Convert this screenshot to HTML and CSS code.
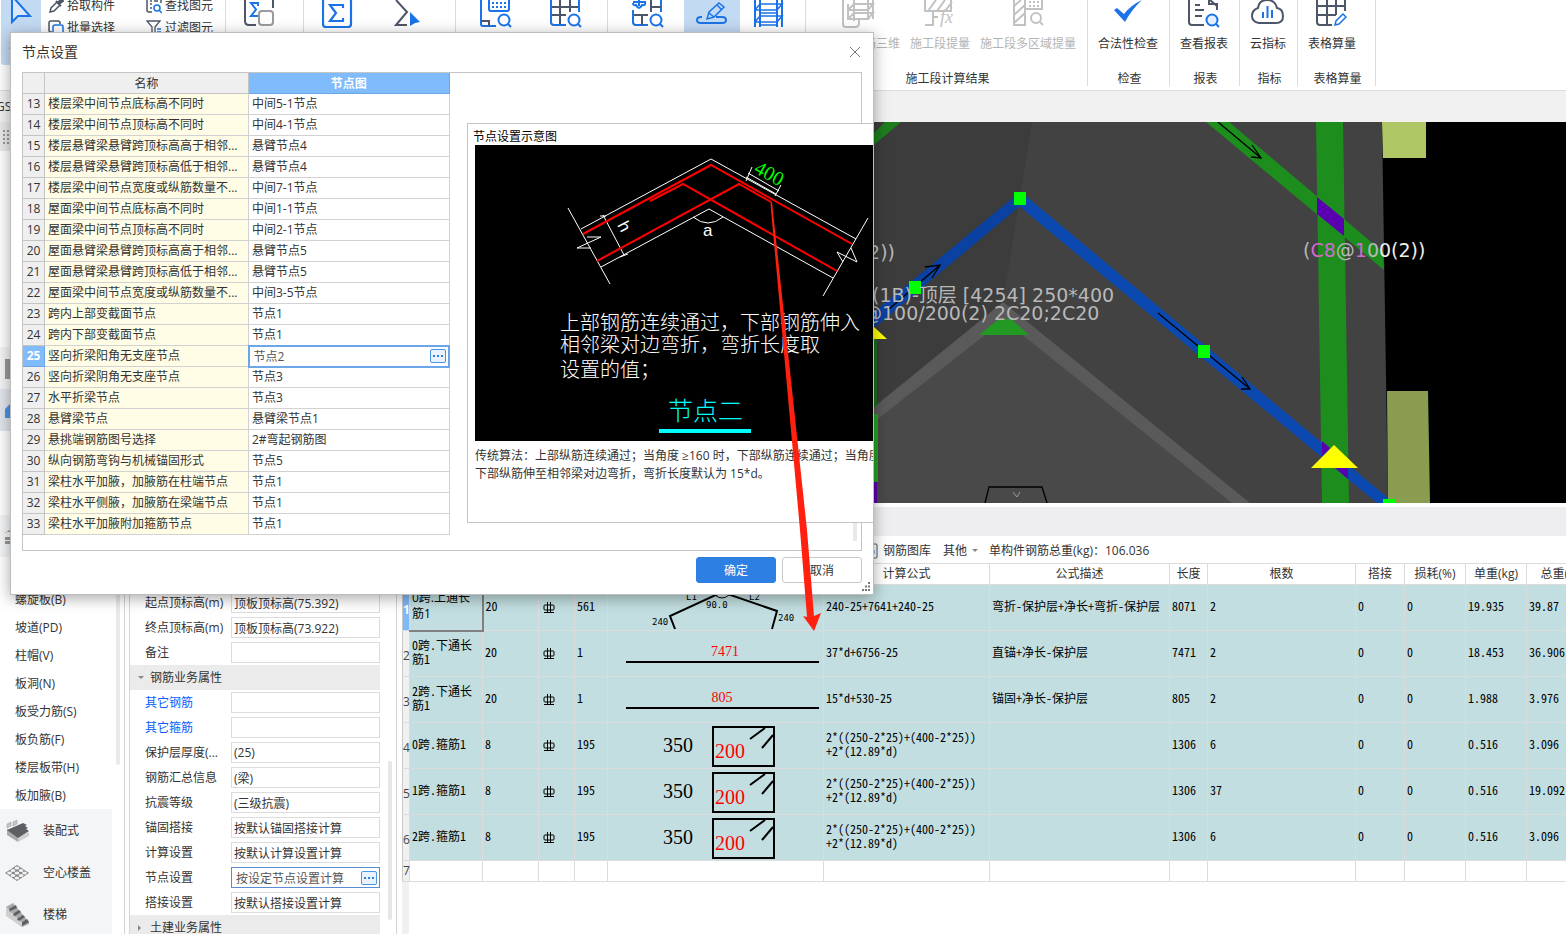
FILE: index.html
```html
<!DOCTYPE html>
<html lang="zh-CN">
<head>
<meta charset="utf-8">
<title>节点设置</title>
<link rel="stylesheet" href="styles.css">
</head>
<body>
<div class="app">
  <header class="ribbon">
    <section class="group g-select">
      <button class="tool pick on" aria-label="选择">
        <svg width="24" height="28" viewBox="0 0 24 28"><path d="M3 -4V22L9 16H21Z" fill="#d9e8fb" stroke="#1a73e8" stroke-width="2"/></svg>
        <span>选择</span>
      </button>
      <div class="minis">
        <button class="mini"><svg width="16" height="16" viewBox="0 0 16 16"><path d="M2 14l1-4 6-6 3 3-6 6z" fill="none" stroke="#4d5666" stroke-width="1.5"/><path d="M8 3l5 5M10 5l3-4 2 2-4 3z" fill="#4d5666" stroke="#4d5666" stroke-width="2"/></svg>拾取构件</button>
        <button class="mini"><svg width="16" height="16" viewBox="0 0 16 16"><path d="M4 12H2.500Q1 12 1 10V3Q1 1 3 1H10Q12 1 12 3V4" fill="none" stroke="#4d5666" stroke-width="1.500"/><rect x="5" y="5" width="10" height="10" rx="2" fill="#fff" stroke="#1a73e8" stroke-width="1.500"/></svg>批量选择</button>
      </div>
      <div class="minis">
        <button class="mini"><svg width="16" height="16" viewBox="0 0 16 16"><path d="M1 0V12Q1 14 3 14H6M15 0V5M4 3H6M4 6H6M4 10H6M8 3H12" fill="none" stroke="#4d5666" stroke-width="1.500"/><circle cx="11" cy="10" r="3" fill="none" stroke="#1a73e8" stroke-width="1.500"/><path d="M13 12l3 3" stroke="#1a73e8" stroke-width="1.500"/></svg>查找图元</button>
        <button class="mini"><svg width="16" height="16" viewBox="0 0 16 16"><path d="M1 1H14L9 7V14L6 12V7Z" fill="none" stroke="#4d5666" stroke-width="1.300"/><path d="M11 9H15M11 12H15" stroke="#1a73e8" stroke-width="1.500"/></svg>过滤图元</button>
      </div>
    </section>
    <section class="group g-one">
      <button class="tool" aria-label="汇总"><svg width="32" height="28" viewBox="0 0 32 28" fill="none" stroke-width="2"><path d="M1 0V21Q1 25 5 25H12M29 0V8" stroke="#4d5666"/><path d="M14 6V3H7L12 9.500 7 16H14" stroke="#1a73e8"/><rect x="15" y="11" width="14" height="14" rx="3" stroke="#9a9a9a" fill="#fff"/></svg></button>
    </section>
    <section class="group g-sum">
      <button class="tool" aria-label="汇总计算"><svg width="32" height="28" viewBox="0 0 32 28" fill="none" stroke="#1a73e8" stroke-width="2.200"><rect x="1" y="-2" width="28" height="29" rx="3"/><path d="M21 8V5H8L14 13 8 21H21V18"/></svg></button>
      <button class="tool" aria-label="汇总选中图元"><svg width="32" height="28" viewBox="0 0 32 28"><path d="M2 0L13 12 2 25H13" fill="none" stroke="#4d5666" stroke-width="2"/><path d="M16 12L26 22 21 23 16 26Z" fill="#1a73e8"/></svg></button>
    </section>
    <section class="group g-look">
      <button class="tool" aria-label="查看计算式"><svg width="32" height="28" viewBox="0 0 32 28" fill="none" stroke="#1a73e8" stroke-width="2"><path d="M1 0V24Q1 26 3 26H16"/><path d="M9 -2V9Q9 11 11 11H27Q29 11 29 9V-2"/><path d="M12 3H27M12 7H27" stroke-dasharray="2 2"/><path d="M1 21H9V26" stroke="#4d5666"/><circle cx="24" cy="20" r="5.500"/><path d="M28 24l3 3"/></svg></button>
      <button class="tool" aria-label="查看工程量"><svg width="32" height="28" viewBox="0 0 32 28" fill="none" stroke="#1a73e8" stroke-width="2"><path d="M1 7H29M1 15H16M10 0V25M20 0V12" stroke="#4d5666"/><path d="M1 0V22Q1 25 4 25H16M29 0V12"/><circle cx="24" cy="20" r="5.500"/><path d="M28 24l3 3"/></svg></button>
    </section>
    <section class="group g-rebar">
      <button class="tool" aria-label="查看钢筋量"><svg width="32" height="28" viewBox="0 0 32 28" fill="none" stroke="#1a73e8" stroke-width="2"><path d="M1 3Q1 6 4 5Q7 11 10 5Q14 6 13 2H1M7 0V6"/><path d="M1 10V22Q1 25 4 25H16M29 0V12"/><path d="M2 15H16M10 15V25M19 0V12M19 7H29" stroke="#4d5666"/><circle cx="24" cy="20" r="5.500"/><path d="M28 24l3 3"/></svg></button>
      <button class="tool on wide" aria-label="编辑钢筋"><svg width="32" height="28" viewBox="0 0 32 28" fill="none" stroke="#1a73e8" stroke-width="2"><path d="M6 17H5Q1 17 1 20T5 23H26Q30 23 30 20T26 17H20"/><path d="M11 19L13 12 23 3 28 7 18 17Z M13 13L18 17M21 5L25 9" stroke-width="1.500"/></svg></button>
      <button class="tool" aria-label="钢筋三维"><svg width="32" height="28" viewBox="0 0 32 28" fill="none" stroke="#1a73e8" stroke-width="2"><path d="M2 0V27M7 0V27M24 0V27M29 0V27" /><path d="M2 10L7 4H29L24 10H2M2 22L7 16H29L24 22H2M7 13H24M7 25H24" stroke-width="1.600"/></svg></button>
    </section>
    <section class="group g-stage">
      <div class="tools">
        <button class="tool" disabled><svg width="34" height="28" viewBox="0 0 34 28" fill="none" stroke="#c2c2c2" stroke-width="2"><path d="M2 0V24Q2 27 5 27H14Q18 27 18 23V18"/><path d="M7 4V20M13 0V21M27 0V20M32 0V19M7 10L13 4H32L27 10H7M7 19L13 13H32L27 19H7"/></svg><span>施工段钢筋三维</span></button>
        <button class="tool" disabled><svg width="34" height="28" viewBox="0 0 34 28" fill="none" stroke="#c2c2c2" stroke-width="2"><path d="M2 0V11H28V-2M5 11L13 0M14 11L22 0M22 11L29 2M10 12V25M2 25H11M10 17H15"/><text x="17" y="23" class="fx">fx</text></svg><span>施工段提量</span></button>
        <button class="tool" disabled><svg width="34" height="28" viewBox="0 0 34 28" fill="none" stroke="#c2c2c2" stroke-width="2"><path d="M3 0V25H14V0M3 6L10 0M3 15L14 5M3 23L14 13M15 9H31V0"/><path d="M18 2H29M18 6H29" stroke-dasharray="2 2"/><circle cx="25" cy="18" r="5"/><path d="M29 22l3 3"/></svg><span>施工段多区域提量</span></button>
      </div>
      <h2>施工段计算结果</h2>
    </section>
    <section class="group g-check">
      <div class="tools"><button class="tool"><svg width="32" height="28" viewBox="0 0 32 28"><path d="M2 10L5 8 12 14Q19 5 30 0Q20 9 13 22Z" fill="#1a73e8"/></svg><span>合法性检查</span></button></div>
      <h2>检查</h2>
    </section>
    <section class="group g-report">
      <div class="tools"><button class="tool"><svg width="32" height="28" viewBox="0 0 32 28" fill="none" stroke="#4d5666" stroke-width="2"><path d="M1 0V22Q1 25 4 25H16M21 0V4H29V10M22 0L29 6M7 5H12M7 10H16M7 16H14"/><circle cx="24" cy="20" r="5.500" fill="#e4effc" stroke="#1a73e8"/><path d="M28 24l3 3" stroke="#1a73e8"/></svg><span>查看报表</span></button></div>
      <h2>报表</h2>
    </section>
    <section class="group g-index">
      <div class="tools"><button class="tool"><svg width="34" height="28" viewBox="0 0 34 28" fill="none" stroke-width="2"><path d="M8 23Q1 22 1 16T7 8Q8 0 16 0T26 8Q32 9 32 16T25 23Z" stroke="#4d5666"/><path d="M12 12V18M16.500 6V18M21 10V18" stroke="#1a73e8"/></svg><span>云指标</span></button></div>
      <h2>指标</h2>
    </section>
    <section class="group g-form">
      <div class="tools"><button class="tool"><svg width="32" height="28" viewBox="0 0 32 28" fill="none" stroke="#4d5666" stroke-width="2"><path d="M1 0V22Q1 25 4 25H16M29 0V11M1 6H29M1 15H20M11 0V25M20 0V15"/><path d="M19 25L20 21 27 14 30 17 23 24Z" stroke="#1a73e8" stroke-width="1.500"/></svg><span>表格算量</span></button></div>
      <h2>表格算量</h2>
    </section>
  </header>
  <div class="strip"><span>GS</span></div>

  <div class="body">
    <nav class="nav">
      <div class="nav-top"><svg width="12" height="16" viewBox="0 0 12 16" fill="#999"><path d="M3 1h2v2h-2zM7 1h2v2h-2zM3 5h2v2h-2zM7 5h2v2h-2zM3 9h2v2h-2zM7 9h2v2h-2zM3 13h2v2h-2zM7 13h2v2h-2z"/></svg></div>
      <ul class="nav-list">
        <li class="cat"><svg width="26" height="26" viewBox="0 0 26 26"><path d="M0 3h20v20H0z" fill="#999"/></svg></li>
        <li class="cat cur gap-after"><svg width="26" height="26" viewBox="0 0 26 26"><path d="M0 11L6 5H26V20H0z" fill="#4a94e6"/></svg></li>
        <li class="cat open"><svg width="26" height="26" viewBox="0 0 26 26"><path d="M0 9L6 5H26V8H0zM0 13H26V16H0zM0 17H26V20H0z" fill="#999"/></svg></li>
        <li><a href="#">螺旋板(B)</a></li>
        <li><a href="#">坡道(PD)</a></li>
        <li><a href="#">柱帽(V)</a></li>
        <li><a href="#">板洞(N)</a></li>
        <li><a href="#">板受力筋(S)</a></li>
        <li><a href="#">板负筋(F)</a></li>
        <li><a href="#">楼层板带(H)</a></li>
        <li><a href="#">板加腋(B)</a></li>
        <li class="cat"><svg width="26" height="26" viewBox="0 0 26 26"><path d="M2 11L13 17V24L2 17z" fill="#aaa"/><path d="M13 19L24 14V18L13 24z" fill="#d0d0d0"/><path d="M2 12L18 5 22 7 20 8 23 10 21 11 24 13 13 20z" fill="#5c6064"/><path d="M2 6L6 4V8L2 10zM8 4L12 2V6L8 8z" fill="#c6c6c6" stroke="#999" stroke-width=".5"/></svg><a href="#">装配式</a></li>
        <li class="cat"><svg width="26" height="26" viewBox="0 0 26 26"><path d="M0 13L12 5 24 13 12 21z" fill="#858585"/><g fill="#f2f2f2"><ellipse cx="12" cy="8" rx="2.400" ry="1.600"/><ellipse cx="8" cy="10.500" rx="2.400" ry="1.600"/><ellipse cx="16" cy="10.500" rx="2.400" ry="1.600"/><ellipse cx="4.500" cy="13" rx="2.400" ry="1.600"/><ellipse cx="12" cy="13" rx="2.400" ry="1.600"/><ellipse cx="19.500" cy="13" rx="2.400" ry="1.600"/><ellipse cx="8" cy="15.500" rx="2.400" ry="1.600"/><ellipse cx="16" cy="15.500" rx="2.400" ry="1.600"/><ellipse cx="12" cy="18" rx="2.400" ry="1.600"/></g></svg><a href="#">空心楼盖</a></li>
        <li class="cat"><svg width="26" height="26" viewBox="0 0 26 26"><path d="M1 5L8 1 24 20V22L17 25 1 13z" fill="#a8a8a8"/><path d="M4 7L11 3 12 6 5 9zM8 12L14 8 16 10 10 14zM12 17L18 13 20 15 14 19zM16 21L22 17 24 20 17 24z" fill="#5c6064"/><path d="M1 5L4 7V10L8 11V14L12 15V18L17 20V25L1 14z" fill="#cfcfcf"/></svg><a href="#">楼梯</a></li>
      </ul>
      <i class="nav-thumb"></i>
    </nav>

    <section class="props">
      <div class="rows">
        <div class="row"><label for="p1">起点顶标高(m)</label><input id="p1" value="顶板顶标高(75.392)"></div>
        <div class="row"><label for="p2">终点顶标高(m)</label><input id="p2" value="顶板顶标高(73.922)"></div>
        <div class="row"><label for="p3">备注</label><input id="p3"></div>
        <h3><i class="caret down"></i>钢筋业务属性</h3>
        <div class="row"><label class="blue" for="p4">其它钢筋</label><input id="p4"></div>
        <div class="row"><label class="blue" for="p5">其它箍筋</label><input id="p5"></div>
        <div class="row"><label for="p6">保护层厚度(...</label><input id="p6" value="(25)"></div>
        <div class="row"><label for="p7">钢筋汇总信息</label><input id="p7" value="(梁)"></div>
        <div class="row"><label for="p8">抗震等级</label><input id="p8" value="(三级抗震)"></div>
        <div class="row"><label for="p9">锚固搭接</label><input id="p9" value="按默认锚固搭接计算"></div>
        <div class="row"><label for="p10">计算设置</label><input id="p10" value="按默认计算设置计算"></div>
        <div class="row"><label for="p11">节点设置</label><div class="combo"><input id="p11" value="按设定节点设置计算"><button class="more" aria-label="更多"><i></i><i></i><i></i></button></div></div>
        <div class="row"><label for="p12">搭接设置</label><input id="p12" value="按默认搭接设置计算"></div>
        <h3><i class="caret right"></i>土建业务属性</h3>
      </div>
      <div class="props-bar"><i></i></div>
    </section>

    <main class="main">
      <svg class="view" viewBox="397 122 1169 381" preserveAspectRatio="xMinYMin slice">
        <rect x="397" y="122" width="2400" height="381" fill="#000"/>
        <path d="M397 122H1382L1388 503H397z" fill="#424242"/>
        <path d="M397 122H1032L1003 302 874 415H397z" fill="#3c3c3c"/>
        <path d="M874 414L1003 310 1240 503H874z" fill="#494949"/>
        <path d="M874 133L885 122H901L874 145z" fill="#1d7d1d"/>
        <path d="M1206 122H1229L1383 252 1384 270z" fill="#1d8d1d"/>
        <path d="M1316 122H1343L1349 503H1322z" fill="#1d8d1d"/>
        <path d="M1317 197L1344 219V236L1317 214z" fill="#5a00b0"/>
        <path d="M1382 122H1426V158H1383z" fill="#aec663"/>
        <path d="M1387 391H1428L1430 503H1388z" fill="#8a9c4f"/>
        <path d="M874 407L1003 302 1250 503H1232L1004 320 874 422z" fill="#5a5a5a"/>
        <path d="M999 319H1011L1029 335H979z" fill="#229922"/>
        <path d="M874 312L1014 197 1020 206 874 328z" fill="#0b41a0"/>
        <path d="M1019 206L1014 199 1027 197 1388 498V503H1377z" fill="#0b48b0"/>
        <path d="M1322 441L1330 448 1322 456zM1334 467H1348V479z" fill="#5a00b0"/>
        <path d="M874 338H877V405L874 408z" fill="#1d6d1d"/><path d="M874 414H878V482H874z" fill="#22a322"/><path d="M874 482H877V503H874z" fill="#5a00b0"/>
        <path d="M1334 445L1358 468H1311zM874 327L887 339H874z" fill="#ff0"/>
        <g fill="none" stroke="#000" stroke-width="1.300"><path d="M1218 122L1261 158M1251 157L1261 158 1252 145M1158 313L1250 389M1241 389L1250 389 1242 377M888 310L940 265M925 267L940 265 932 278"/><path d="M985 503L989 487H1042L1047 503"/></g>
        <path d="M1013 492L1017 497 1020 492" fill="none" stroke="#999"/>
        <path d="M1014 192h12v13h-12zM909 281h12v13h-12zM1198 345h12v13h-12zM1383 499h12v5h-12z" fill="#0f0"/>
        <g class="cad"><text x="895" y="259" text-anchor="end">100(2))</text><text x="872" y="302">(1B)-顶层 [4254] 250*400</text><text x="863" y="320">@100/200(2) 2C20;2C20</text><text x="1303" y="257">(<tspan fill="#d06ad0">C8</tspan>@<tspan fill="#d06ad0">1</tspan>0<tspan fill="#eee">0(2))</tspan></text></g>
      </svg>
      <div class="splitter"></div>
      <div class="bar">
        <button class="lib"><svg width="14" height="16" viewBox="0 0 14 16" fill="none" stroke="#4d5666"><rect x="1" y="1" width="12" height="14" rx="1"/><path d="M10 7V11" stroke="#1a73e8"/></svg>钢筋图库</button>
        <button>其他<i class="caret down"></i></button>
        <span>单构件钢筋总重(kg)：106.036</span>
      </div>
      <div class="sheet">
        <table class="bars">
          <colgroup><col class="c7"><col class="c73"><col class="c56"><col class="c36"><col class="c33"><col class="c216"><col class="c166"><col class="c180"><col class="c38"><col class="c148"><col class="c49"><col class="c61"><col class="c61"><col class="c72"></colgroup>
          <thead><tr><th></th><th></th><th></th><th></th><th></th><th></th><th>计算公式</th><th>公式描述</th><th>长度</th><th>根数</th><th>搭接</th><th>损耗(%)</th><th>单重(kg)</th><th>总重(kg)</th></tr></thead>
          <tbody>
            <tr><th class="cur">1</th><td class="sel">0跨.上通长<br>筋1</td><td>20</td><td class="sym"><svg width="12" height="12" viewBox="0 0 12 12"><path d="M1 4Q1 3 2 3H10Q11 3 11 4V7Q11 8 10 8H2Q1 8 1 7zM4.500 0V11M7.500 0V11M1 10.500H11"/></svg></td><td>561</td><td class="pic"><svg width="215" height="45" viewBox="607 585 215 45"><path d="M674 629L669 616 721 592 776 611 771 629" fill="none" stroke="#000" stroke-width="2"/><path d="M714 595Q721 601 728 595" fill="none" stroke="#000"/><g class="tiny"><text x="685" y="600">L1</text><text x="748" y="600">L2</text><text x="705" y="608">90.0</text><text x="651" y="625">240</text><text x="777" y="621">240</text></g></svg></td><td>240-25+7641+240-25</td><td>弯折-保护层+净长+弯折-保护层</td><td>8071</td><td>2</td><td>0</td><td>0</td><td>19.935</td><td>39.87</td></tr>
            <tr><th>2</th><td>0跨.下通长<br>筋1</td><td>20</td><td class="sym"><svg width="12" height="12" viewBox="0 0 12 12"><path d="M1 4Q1 3 2 3H10Q11 3 11 4V7Q11 8 10 8H2Q1 8 1 7zM4.500 0V11M7.500 0V11M1 10.500H11"/></svg></td><td>1</td><td class="pic"><svg width="215" height="45" viewBox="0 0 215 45"><path d="M18 31H211" stroke="#000" stroke-width="2"/><text x="117" y="25" class="len">7471</text></svg></td><td>37*d+6756-25</td><td>直锚+净长-保护层</td><td>7471</td><td>2</td><td>0</td><td>0</td><td>18.453</td><td>36.906</td></tr>
            <tr><th>3</th><td>2跨.下通长<br>筋1</td><td>20</td><td class="sym"><svg width="12" height="12" viewBox="0 0 12 12"><path d="M1 4Q1 3 2 3H10Q11 3 11 4V7Q11 8 10 8H2Q1 8 1 7zM4.500 0V11M7.500 0V11M1 10.500H11"/></svg></td><td>1</td><td class="pic"><svg width="215" height="45" viewBox="0 0 215 45"><path d="M18 31H211" stroke="#000" stroke-width="2"/><text x="114" y="25" class="len">805</text></svg></td><td>15*d+530-25</td><td>锚固+净长-保护层</td><td>805</td><td>2</td><td>0</td><td>0</td><td>1.988</td><td>3.976</td></tr>
            <tr><th>4</th><td>0跨.箍筋1</td><td>8</td><td class="sym"><svg width="12" height="12" viewBox="0 0 12 12"><path d="M1 4Q1 3 2 3H10Q11 3 11 4V7Q11 8 10 8H2Q1 8 1 7zM4.500 0V11M7.500 0V11M1 10.500H11"/></svg></td><td>195</td><td class="pic"><svg width="215" height="45" viewBox="0 0 215 45"><path d="M105 4H166V43H105zM142 16L157 5M154 25L165 12" fill="none" stroke="#000" stroke-width="2"/><text x="55" y="29" class="big">350</text><text x="107" y="35" class="big red">200</text></svg></td><td>2*((250-2*25)+(400-2*25))<br>+2*(12.89*d)</td><td></td><td>1306</td><td>6</td><td>0</td><td>0</td><td>0.516</td><td>3.096</td></tr>
            <tr><th>5</th><td>1跨.箍筋1</td><td>8</td><td class="sym"><svg width="12" height="12" viewBox="0 0 12 12"><path d="M1 4Q1 3 2 3H10Q11 3 11 4V7Q11 8 10 8H2Q1 8 1 7zM4.500 0V11M7.500 0V11M1 10.500H11"/></svg></td><td>195</td><td class="pic"><svg width="215" height="45" viewBox="0 0 215 45"><path d="M105 4H166V43H105zM142 16L157 5M154 25L165 12" fill="none" stroke="#000" stroke-width="2"/><text x="55" y="29" class="big">350</text><text x="107" y="35" class="big red">200</text></svg></td><td>2*((250-2*25)+(400-2*25))<br>+2*(12.89*d)</td><td></td><td>1306</td><td>37</td><td>0</td><td>0</td><td>0.516</td><td>19.092</td></tr>
            <tr><th>6</th><td>2跨.箍筋1</td><td>8</td><td class="sym"><svg width="12" height="12" viewBox="0 0 12 12"><path d="M1 4Q1 3 2 3H10Q11 3 11 4V7Q11 8 10 8H2Q1 8 1 7zM4.500 0V11M7.500 0V11M1 10.500H11"/></svg></td><td>195</td><td class="pic"><svg width="215" height="45" viewBox="0 0 215 45"><path d="M105 4H166V43H105zM142 16L157 5M154 25L165 12" fill="none" stroke="#000" stroke-width="2"/><text x="55" y="29" class="big">350</text><text x="107" y="35" class="big red">200</text></svg></td><td>2*((250-2*25)+(400-2*25))<br>+2*(12.89*d)</td><td></td><td>1306</td><td>6</td><td>0</td><td>0</td><td>0.516</td><td>3.096</td></tr>
            <tr class="empty"><th>7</th><td></td><td></td><td></td><td></td><td></td><td></td><td></td><td></td><td></td><td></td><td></td><td></td><td></td></tr>
          </tbody>
        </table>
      </div>
    </main>
  </div>

  <div class="dialog" role="dialog" aria-labelledby="dlg-title">
    <div class="dlg-head"><h1 id="dlg-title">节点设置</h1><button class="close" aria-label="关闭"><svg width="12" height="12" viewBox="0 0 12 12"><path d="M1 1L11 11M11 1L1 11" stroke="#777" fill="none"/></svg></button></div>
    <div class="frame">
      <table class="nodes">
        <colgroup><col class="n-num"><col class="n-name"><col class="n-val"></colgroup>
        <thead><tr><th></th><th>名称</th><th class="hot">节点图</th></tr></thead>
        <tbody>
          <tr><th>13</th><td>楼层梁中间节点底标高不同时</td><td>中间5-1节点</td></tr>
          <tr><th>14</th><td>楼层梁中间节点顶标高不同时</td><td>中间4-1节点</td></tr>
          <tr><th>15</th><td>楼层悬臂梁悬臂跨顶标高高于相邻...</td><td>悬臂节点4</td></tr>
          <tr><th>16</th><td>楼层悬臂梁悬臂跨顶标高低于相邻...</td><td>悬臂节点4</td></tr>
          <tr><th>17</th><td>楼层梁中间节点宽度或纵筋数量不...</td><td>中间7-1节点</td></tr>
          <tr><th>18</th><td>屋面梁中间节点底标高不同时</td><td>中间1-1节点</td></tr>
          <tr><th>19</th><td>屋面梁中间节点顶标高不同时</td><td>中间2-1节点</td></tr>
          <tr><th>20</th><td>屋面悬臂梁悬臂跨顶标高高于相邻...</td><td>悬臂节点5</td></tr>
          <tr><th>21</th><td>屋面悬臂梁悬臂跨顶标高低于相邻...</td><td>悬臂节点5</td></tr>
          <tr><th>22</th><td>屋面梁中间节点宽度或纵筋数量不...</td><td>中间3-5节点</td></tr>
          <tr><th>23</th><td>跨内上部变截面节点</td><td>节点1</td></tr>
          <tr><th>24</th><td>跨内下部变截面节点</td><td>节点1</td></tr>
          <tr><th class="hot">25</th><td>竖向折梁阳角无支座节点</td><td class="edit"><div class="combo"><input aria-label="节点图" value="节点2"><button class="more" aria-label="选择节点"><i></i><i></i><i></i></button></div></td></tr>
          <tr><th>26</th><td>竖向折梁阴角无支座节点</td><td>节点3</td></tr>
          <tr><th>27</th><td>水平折梁节点</td><td>节点3</td></tr>
          <tr><th>28</th><td>悬臂梁节点</td><td>悬臂梁节点1</td></tr>
          <tr><th>29</th><td>悬挑端钢筋图号选择</td><td>2#弯起钢筋图</td></tr>
          <tr><th>30</th><td>纵向钢筋弯钩与机械锚固形式</td><td>节点5</td></tr>
          <tr><th>31</th><td>梁柱水平加腋，加腋筋在柱端节点</td><td>节点1</td></tr>
          <tr><th>32</th><td>梁柱水平侧腋，加腋筋在梁端节点</td><td>节点1</td></tr>
          <tr><th>33</th><td>梁柱水平加腋附加箍筋节点</td><td>节点1</td></tr>
        </tbody>
      </table>
      <i class="frame-thumb"></i>
    </div>
    <aside class="preview">
      <h2>节点设置示意图</h2>
      <svg class="drawing" width="399" height="296" viewBox="475 145 399 296">
        <rect x="475" y="145" width="399" height="296" fill="#000"/>
        <g fill="none" stroke="#fff"><path d="M581 229L711 159 856 239M601 267L709 209 833 278M568 208L610 284M587 237L601 237 577 248 591 248M868 218L823 296M843 262L837 252 857 262 851 248M603 215L624 255M600 216H606M620 257L628 254M693 217Q708 229 723 217M746 177L776 194M748 173L779 191M752 167L746 181M781 185L775 196"/></g>
        <g fill="none" stroke="#f00" stroke-width="2"><path d="M583 234L711 165 852 244M597 261L739 184 771 202M650 201L683 184 837 271"/></g>
        <text x="0" y="0" transform="translate(753 172) rotate(29)" class="dim">400</text>
        <text x="0" y="0" transform="translate(617 225) rotate(62)" class="sym-h">h</text>
        <text x="703" y="236" class="sym-a">a</text>
        <g class="note"><text x="560" y="330">上部钢筋连续通过，下部钢筋伸入</text><text x="560" y="352">相邻梁对边弯折，弯折长度取</text><text x="560" y="377">设置的值；</text></g>
        <text x="668" y="420" class="name">节点二</text><path d="M659 431H751" stroke="#0ff" stroke-width="4"/>
      </svg>
      <p>传统算法：上部纵筋连续通过；当角度 ≥160 时，下部纵筋连续通过；当角度＜160 时，<br>下部纵筋伸至相邻梁对边弯折，弯折长度默认为 15*d。</p>
    </aside>
    <div class="dlg-foot"><button class="btn ok">确定</button><button class="btn">取消</button></div>
    <svg class="grip" width="10" height="10" viewBox="0 0 10 10" fill="#777"><path d="M7 0h2v2h-2zM4 3.500h2v2h-2zM7 3.500h2v2h-2zM1 7h2v2h-2zM4 7h2v2h-2zM7 7h2v2h-2z"/></svg>
  </div>

  <svg class="pointer" width="60" height="432" viewBox="765 200 60 432"><path d="M771 202H772L807 530 814 616 821 613 814 631 803 616 807 617 800 530 770.500 204z" fill="#ff2010"/></svg>
</div>
</body>
</html>
```
FILE: styles.css
```css
* { box-sizing: border-box; }
body { margin: 0; font: 12px/16px "Open Sans", "Noto Sans CJK SC", sans-serif; color: #333; background: #fff; }
h1, h2, h3, p, ul { margin: 0; padding: 0; font-weight: 400; }
button { font: inherit; color: inherit; background: none; border: 0; padding: 0; white-space: nowrap; }
input { font: inherit; color: inherit; min-width: 0; }
svg { display: block; flex: none; }
a { color: inherit; text-decoration: none; }

.app { position: relative; height: 100vh; min-height: 600px; display: flex; flex-direction: column; overflow: hidden; }

/* ribbon */
.ribbon { display: flex; flex: none; height: 91px; padding-bottom: 4px; border-bottom: 1px solid #dcdcdc; }
.group { display: flex; flex: none; border-right: 1px solid #dcdcdc; }
.tools { display: flex; gap: 10px; height: 65px; }
.tool { display: flex; flex: none; flex-direction: column; align-items: center; gap: 8px; height: 65px; min-width: 32px; }
.tool:disabled { color: #b4b4b4; }
.tool.on { background: #c3daf3; border-radius: 0 0 3px 3px; }
.tool.wide { width: 56px; }
.fx { font: italic 18px "Liberation Serif", serif; fill: #c2c2c2; stroke: none; }
.group h2 { font-size: 12px; line-height: 16px; text-align: center; margin-top: 6px; padding-right: 8px; }
.g-select { width: 226px; padding-left: 1px; }
.pick { width: 40px; }
.minis { display: flex; flex: none; flex-direction: column; gap: 6px; padding-left: 7px; width: 98px; margin-top: -2px; }
.minis:last-child { width: 86px; }
.mini { display: flex; align-items: center; gap: 3px; height: 16px; }
.g-one { width: 78px; padding-left: 18px; }
.g-sum { width: 152px; padding-left: 18px; gap: 40px; }
.g-look { width: 152px; padding-left: 24px; gap: 38px; }
.g-rebar { width: 198px; padding-left: 24px; gap: 20px; }
.g-rebar .wide { margin-right: -7px; }
.g-stage, .g-check, .g-report, .g-index, .g-form { flex-direction: column; padding-left: 10px; }
.g-stage { width: 282px; }
.g-check { width: 82px; }
.g-report { width: 70px; }
.g-index { width: 58px; }
.g-form { width: 78px; }

.strip { flex: none; height: 31px; background: #f1f1f1; display: flex; align-items: center; }
.strip span { margin-left: -4px; }

.body { flex: 1; min-height: 0; display: flex; }

/* component navigator */
.nav { flex: none; width: 125px; border-right: 1px solid #d4d4d4; display: grid; grid-template: 29px auto / 112px 12px; overflow: hidden; }
.nav-top { background: #e9e9ec; grid-column: 1 / 3; padding: 7px 0 0; }
.nav-list { list-style: none; padding-top: 196px; background: #fff; }
.nav-list li { height: 28px; padding: 2px 0 0 15px; display: flex; align-items: center; }
.nav-list .cat { height: 42px; padding-left: 5px; gap: 12px; background: #f4f5f7; }
.nav-list .cur { background: #e2e6ec; }
.nav-list .gap-after { margin-bottom: 84px; }
.nav-list .open { margin-bottom: 28px; }
.nav-thumb { width: 4px; height: 520px; margin: 94px 0 0 4px; background: #e9e9e9; border-radius: 2px; }

/* property list */
.props { flex: none; width: 268px; margin-left: 4px; border-left: 1px solid #d4d4d4; border-right: 1px solid #d4d4d4; display: flex; overflow: hidden; }
.rows { flex: none; width: 250px; padding-top: 468px; }
.row { height: 25px; padding-left: 15px; display: grid; grid-template-columns: 86px minmax(0, 1fr); align-items: center; }
.row > input, .combo { height: 21px; width: 100%; border: 1px solid #dcdcdc; background: #fff; padding: 0 2px; }
.row label { white-space: nowrap; }
.row .blue { color: #0a5cff; }
.combo { display: flex; align-items: center; }
.combo input { flex: 1; border: 0; padding: 0 2px; height: 17px; background: none; color: #555; }
.row .combo { border-color: #5b8bd0; }
.more { flex: none; display: flex; align-items: center; justify-content: center; gap: 2px; width: 16px; height: 14px; border: 1px solid #4a94e6; border-radius: 2px; background: #eaf3fd; }
.more i { width: 2px; height: 2px; background: #2d7fe3; }
.rows h3 { height: 25px; font-size: 12px; line-height: 25px; background: #ebebeb; padding-left: 8px; display: flex; align-items: center; gap: 6px; }
.caret { border: 3px solid transparent; width: 0; height: 0; flex: none; }
.caret.down { border-top-color: #888; border-bottom: 0; }
.caret.right { border-left-color: #888; border-right: 0; margin-right: 3px; }
.props-bar i { display: block; width: 4px; height: 159px; margin: 639px 0 0 8px; border-radius: 2px; background: #e6e6e6; }

/* model view and bar list */
.main { flex: 1; min-width: 0; display: flex; flex-direction: column; overflow: hidden; }
.view { width: 100%; height: 381px; }
.cad { font: 19px "DejaVu Sans", "Noto Sans CJK SC", sans-serif; fill: #b8b8b8; }
.splitter { flex: none; height: 33px; border-top: 4px solid #fff; background: #eeeef0; }
.bar { flex: none; height: 27px; padding: 2px 0 0 467px; display: flex; align-items: center; gap: 12px; white-space: nowrap; }
.bar button { display: flex; align-items: center; gap: 5px; }
.bar button + span { margin-left: -1px; }
.sheet { flex: 1; min-height: 0; padding-left: 5px; overflow: hidden; background: linear-gradient(#f0f0f0, #f0f0f0) 5px 0 / 7px 100% no-repeat; }
.bars { width: 1196px; table-layout: fixed; border-collapse: collapse; font: 12px/14px "Noto Sans Mono CJK SC", "Noto Sans CJK SC", monospace; color: #000; }
.bars th, .bars td { border: 1px solid #dcdcdc; border-left: 0; padding: 0 0 3px 2px; text-align: left; font-weight: 400; white-space: nowrap; overflow: hidden; }
.bars tr > :first-child { border-left: 1px solid #c8c8c8; overflow: visible; }
.bars thead th { height: 21px; text-align: center; padding: 0; background: #fff; color: #333; font: 12px/16px "Open Sans", "Noto Sans CJK SC", sans-serif; }
.bars tbody td { height: 46px; background: #c2dee0; }
.bars tbody th { background: #f0f0f0; padding: 4px 0 0; color: #444; font: 12px/16px "Open Sans", sans-serif; }
.bars tbody .cur { background: #80b8f8; color: #fff; font-weight: 700; }
.bars .sel { border-right: 2px solid #808080; border-bottom: 2px solid #808080; font: 12px/16px "Open Sans", "Noto Sans CJK SC", sans-serif; }
.bars .sym { padding: 0 0 0 4px; }
.sym svg { fill: none; stroke: #000; }
.bars .pic { padding: 0; }
.bars .empty td { height: 21px; background: #fff; }
.bars .empty th { padding: 0; }
.tiny { font: 9px "DejaVu Sans Mono", monospace; }
.len { font: 14px "Liberation Serif", serif; fill: #f00; text-anchor: middle; }
.big { font: 20px "Liberation Serif", serif; }
.red { fill: #f00; }
.c7 { width: 7px; } .c73 { width: 73px; } .c56 { width: 56px; } .c36 { width: 36px; } .c33 { width: 33px; }
.c216 { width: 216px; } .c166 { width: 166px; } .c180 { width: 180px; } .c38 { width: 38px; } .c148 { width: 148px; }
.c49 { width: 49px; } .c61 { width: 61px; } .c72 { width: 72px; }

/* dialog */
.dialog { position: absolute; left: 10px; top: 32px; width: 864px; height: 563px; background: #fff; border: 1px solid #bdbdbd; box-shadow: 0 3px 14px rgba(0, 0, 0, .35); padding: 0 11px; display: flex; flex-direction: column; }
.dlg-head { display: flex; justify-content: space-between; align-items: center; height: 39px; padding: 0 1px 2px 0; }
.dlg-head h1 { font-size: 14px; line-height: 20px; }
.frame { flex: 1; border: 1px solid #c4c4c4; display: flex; justify-content: space-between; align-items: flex-start; overflow: hidden; }
.frame-thumb { width: 4px; height: 18px; margin: 450px 4px 0 0; background: #e9e9e9; }
.nodes { width: 428px; margin: -1px 0 0 -1px; table-layout: fixed; border-collapse: collapse; }
.n-num { width: 22px; } .n-name { width: 204px; }
.nodes th, .nodes td { height: 21px; line-height: 16px; padding: 0 3px; border: 1px solid #d2d2d2; text-align: left; font-weight: 400; white-space: nowrap; overflow: hidden; }
.nodes th { background: #efefef; text-align: center; padding: 0; border-color: #c4c4c4; }
.nodes thead th { padding-top: 2px; }
.nodes td:nth-child(2) { background: #fffde6; }
.nodes .hot { background: #80bbfb; border-color: #6aa6e8; color: #fff; font-weight: 700; }
.nodes .edit { padding: 0; border: 2px solid #6aa6e8; }
.edit .combo { height: 17px; border: 0; }
.preview { position: absolute; left: 456px; top: 90px; right: 0; height: 400px; padding-left: 7px; background: #fff; border: 1px solid #c4c4c4; border-right: 0; overflow: hidden; }
.preview h2 { font-size: 12px; line-height: 21px; color: #000; margin-left: -2px; padding-top: 2px; }
.preview .drawing { margin-top: -2px; }
.preview p { line-height: 18px; padding-top: 6px; white-space: nowrap; }
.dim { font: 20px "Liberation Serif", serif; fill: #0f0; }
.sym-h, .sym-a { font: 17px "Liberation Sans", sans-serif; fill: #fff; }
.note { font: 300 20px "Noto Sans CJK SC", sans-serif; fill: #fff; }
.name { font: 300 25px "Noto Sans CJK SC", sans-serif; fill: #0ff; }
.dlg-foot { display: flex; justify-content: flex-end; gap: 6px; padding: 6px 0 11px; }
.btn { width: 80px; height: 26px; padding-top: 1px; border: 1px solid #c8c8c8; border-radius: 3px; background: #fff; }
.btn.ok { background: #2d7fe3; border-color: #2d7fe3; color: #fff; }
.grip { position: absolute; right: 2px; bottom: 2px; }
.pointer { position: absolute; left: 765px; top: 200px; pointer-events: none; }
```
